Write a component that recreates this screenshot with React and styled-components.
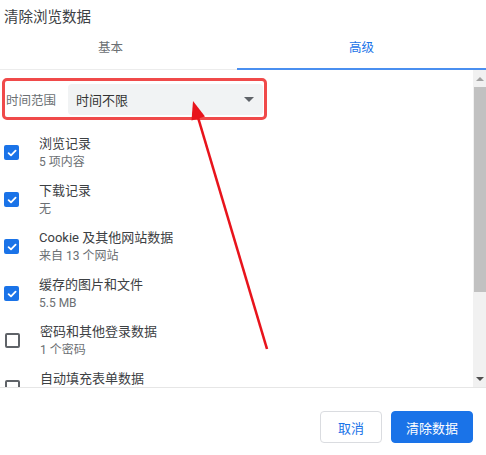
import React from 'react'
import styled, { createGlobalStyle } from 'styled-components'

const Global = createGlobalStyle`
  html, body { margin: 0; padding: 0; background: #fff; }
  body { font-family: Roboto, "Noto Sans CJK SC", sans-serif; }
`

const items = [
  { title: '浏览记录', sub: '5 项内容', checked: true },
  { title: '下载记录', sub: '无', checked: true },
  { title: 'Cookie 及其他网站数据', sub: '来自 13 个网站', checked: true },
  { title: '缓存的图片和文件', sub: '5.5 MB', checked: true },
  { title: '密码和其他登录数据', sub: '1 个密码', checked: false },
  { title: '自动填充表单数据', sub: '\u00a0', checked: false },
]

const CheckIcon = () => (
  <svg width="10" height="10" viewBox="0 0 10 10">
    <path d="M1.6 5.2 L4 7.4 L8.6 2.6" fill="none" stroke="#fff" strokeWidth="1.8" strokeLinecap="round" strokeLinejoin="round" />
  </svg>
)

const App = () => {
  return (
    <Dialog>
      <Global />
      <Title>清除浏览数据</Title>

      <Tabs>
        <Tab $shift={16}>基本</Tab>
        <Tab $active>高级</Tab>
      </Tabs>

      <Body>
        <List>
          <Highlight>
            <RangeLabel>时间范围</RangeLabel>
            <Select>
              <span>时间不限</span>
              <Caret />
            </Select>
          </Highlight>

          {items.map((it) => (
            <Row key={it.title}>
              <Box $checked={it.checked}>{it.checked && <CheckIcon />}</Box>
              <Texts>
                <ItemTitle>{it.title}</ItemTitle>
                <ItemSub>{it.sub}</ItemSub>
              </Texts>
            </Row>
          ))}
        </List>

        <Scrollbar>
          <ScrollArrow $up />
          <Track>
            <Thumb />
          </Track>
          <ScrollArrow />
        </Scrollbar>
      </Body>

      <Footer>
        <Button>取消</Button>
        <Button $primary>清除数据</Button>
      </Footer>

      <Annotation width="486" height="455" viewBox="0 0 486 455">
        <line x1="267" y1="349" x2="197" y2="114" stroke="#e8141c" strokeWidth="2.6" />
        <polygon points="193,101 205,116.5 191.5,120.5" fill="#e8141c" />
      </Annotation>
    </Dialog>
  )
}

const Dialog = styled.div`
  position: relative;
  width: 486px;
  height: 455px;
  display: flex;
  flex-direction: column;
  background: #fff;
  overflow: hidden;
`

const Title = styled.div`
  height: 30px;
  padding-left: 4px;
  display: flex;
  align-items: center;
  font-size: 14.5px;
  color: #3c4043;
`

const Tabs = styled.div`
  display: flex;
  height: 39px;
  border-bottom: 1px solid #ececec;
`

const Tab = styled.div`
  flex: ${(p) => (p.$active ? '0 0 249px' : '1')};
  display: flex;
  align-items: center;
  justify-content: center;
  padding-right: ${(p) => p.$shift || 0}px;
  padding-bottom: 5px;
  font-size: 12.5px;
  color: ${(p) => (p.$active ? '#1a73e8' : '#6b6f73')};
  border-bottom: 2px solid ${(p) => (p.$active ? '#4a8ff0' : 'transparent')};
  margin-bottom: -1px;
`

const Body = styled.div`
  display: flex;
  height: 317px;
  border-bottom: 1px solid #e6e6e6;
`

const List = styled.div`
  flex: 1;
  overflow: hidden;
  padding: 8px 0 0 2px;
`

const Highlight = styled.div`
  width: 259px;
  height: 36px;
  display: flex;
  align-items: center;
  border: 3px solid #f04a4a;
  border-radius: 5px;
  margin-bottom: 9px;
`

const RangeLabel = styled.div`
  width: 62px;
  padding-left: 1px;
  font-size: 12.5px;
  color: #6b6f73;
`

const Select = styled.div`
  flex: 1;
  height: 31px;
  margin-right: 1px;
  display: flex;
  align-items: center;
  justify-content: space-between;
  padding: 0 8px;
  background: #f1f3f4;
  border-radius: 4px;
  font-size: 13px;
  color: #333;
`

const Caret = styled.span`
  width: 0;
  height: 0;
  border-left: 5px solid transparent;
  border-right: 5px solid transparent;
  border-top: 5px solid #5f6368;
  margin-right: 1px;
`

const Row = styled.div`
  display: flex;
  align-items: center;
  height: 47px;
`

const Box = styled.div`
  width: ${(p) => (p.$checked ? 15 : 11)}px;
  height: ${(p) => (p.$checked ? 15 : 11)}px;
  margin: 0 20px 0 ${(p) => (p.$checked ? 2 : 3)}px;
  flex-shrink: 0;
  display: flex;
  align-items: center;
  justify-content: center;
  border-radius: 2px;
  background: ${(p) => (p.$checked ? '#1a73e8' : '#fff')};
  border: ${(p) => (p.$checked ? 'none' : '2px solid #5f6368')};
`

const Texts = styled.div`
  display: flex;
  flex-direction: column;
`

const ItemTitle = styled.div`
  font-size: 13px;
  line-height: 19px;
  color: #3c4043;
`

const ItemSub = styled.div`
  font-size: 12px;
  line-height: 19px;
  color: #6b6f73;
`

const Scrollbar = styled.div`
  width: 13px;
  display: flex;
  flex-direction: column;
  background: #f1f1f1;
`

const ScrollArrow = styled.div`
  height: 17px;
  display: flex;
  align-items: center;
  justify-content: center;
  &::before {
    content: '';
    border-left: 4px solid transparent;
    border-right: 4px solid transparent;
    ${(p) =>
      p.$up
        ? 'border-bottom: 4px solid #a3a3a3;'
        : 'border-top: 4px solid #505050;'}
  }
`

const Track = styled.div`
  flex: 1;
  padding-left: 1px;
`

const Thumb = styled.div`
  height: 205px;
  background: #c1c1c1;
`

const Footer = styled.div`
  flex: 1;
  display: flex;
  justify-content: flex-end;
  align-items: flex-start;
  gap: 9px;
  padding: 23px 13px 0 0;
`

const Button = styled.button`
  all: unset;
  box-sizing: border-box;
  height: 32px;
  padding: 0 ${(p) => (p.$primary ? 14 : 17)}px;
  display: flex;
  align-items: center;
  border-radius: 4px;
  font-size: 13px;
  font-family: Roboto, "Noto Sans CJK SC", sans-serif;
  color: ${(p) => (p.$primary ? '#fff' : '#1a73e8')};
  background: ${(p) => (p.$primary ? '#1a73e8' : '#fff')};
  border: 1px solid ${(p) => (p.$primary ? '#1a73e8' : '#dadce0')};
`

const Annotation = styled.svg`
  position: absolute;
  left: 0;
  top: 0;
  pointer-events: none;
`

export default App
